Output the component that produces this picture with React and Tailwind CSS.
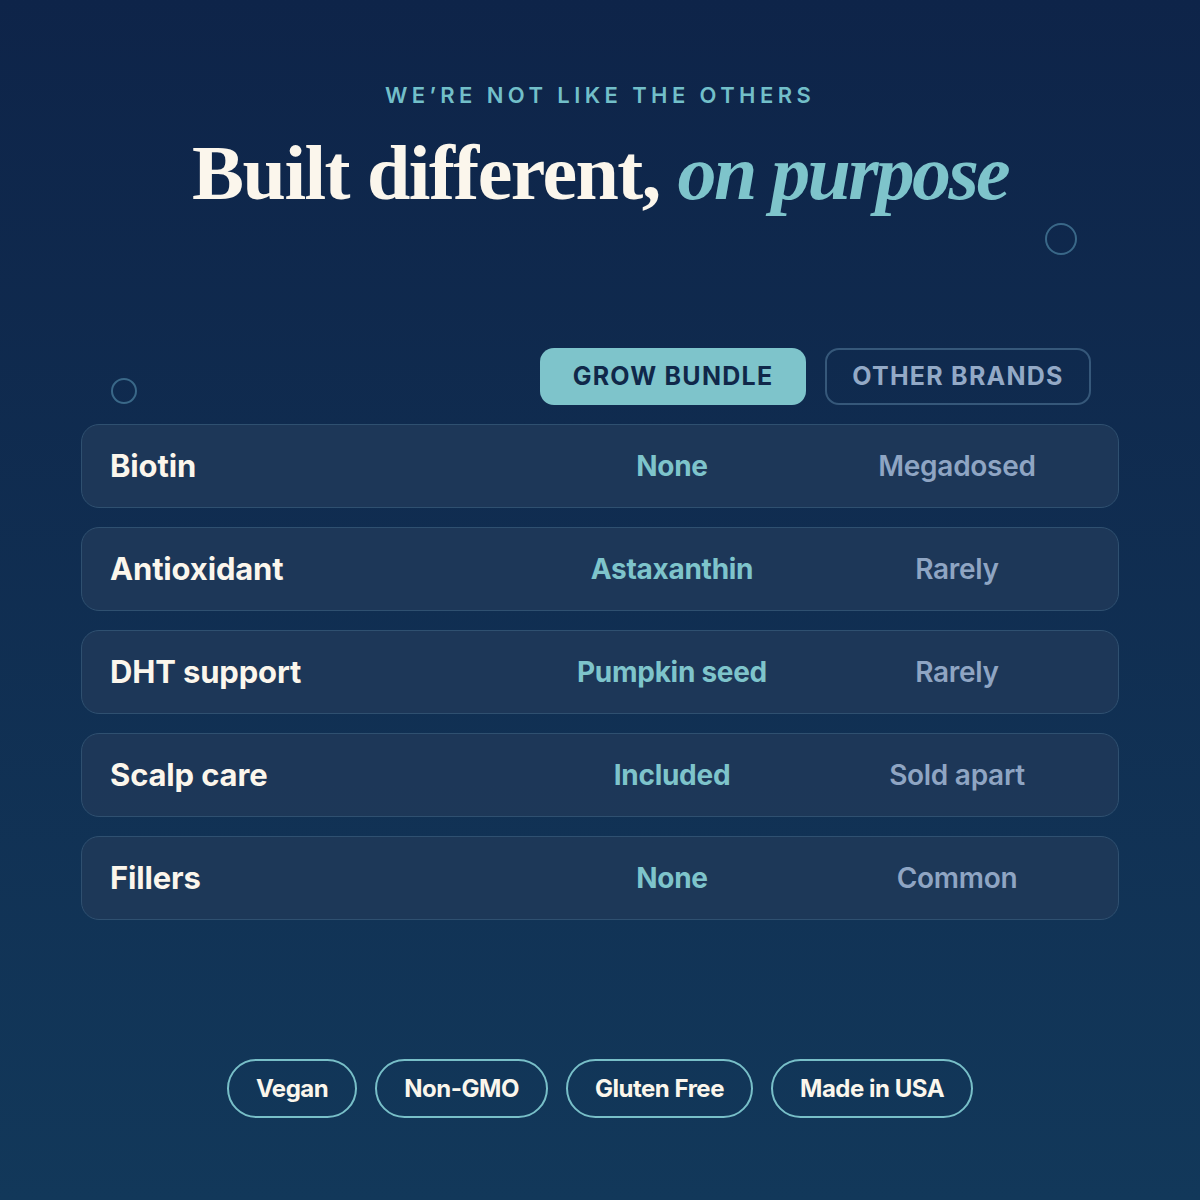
import { Fragment } from 'react'

const rows = [
  { label: 'Biotin', ours: 'None', theirs: 'Megadosed' },
  { label: 'Antioxidant', ours: 'Astaxanthin', theirs: 'Rarely' },
  { label: 'DHT support', ours: 'Pumpkin seed', theirs: 'Rarely' },
  { label: 'Scalp care', ours: 'Included', theirs: 'Sold apart' },
  { label: 'Fillers', ours: 'None', theirs: 'Common' },
]

const badges = ['Vegan', 'Non-GMO', 'Gluten Free', 'Made in USA']

const sans = "font-['Inter','Noto_Sans',sans-serif]"

const App = () => {
  return (
    <div className={`relative w-[1200px] h-[1200px] overflow-hidden bg-gradient-to-b from-[#0e2449] to-[#12385a] flex flex-col items-center ${sans}`}>
      {/* decorative rings */}
      <div className="absolute left-[1045px] top-[223px] w-[32px] h-[32px] rounded-full border-2 border-[#3a6888]" />
      <div className="absolute left-[111px] top-[378px] w-[26px] h-[26px] rounded-full border-2 border-[#3a6888]" />

      <p className="mt-[84px] text-[22px] leading-[22px] font-semibold tracking-[0.2em] text-[#72bfc9]">
        WE’RE NOT LIKE THE OTHERS
      </p>
      <h1 className="mt-[22px] font-['Liberation_Serif','DejaVu_Serif',serif] text-[78px] leading-[90px] font-bold text-[#fbf6ec] tracking-[-0.02em]">
        Built different, <span className="italic font-bold tracking-[-0.035em] text-[#7ec4cb]">on purpose</span>
      </h1>

      <div className="mt-[130px] w-[1038px]">
        <div className="grid grid-cols-[1fr_266px_266px] gap-x-[19px] pr-[28px] pl-[30px] mb-[19px]">
          <div />
          <div className="h-[57px] rounded-[14px] bg-[#7ec4cb] flex items-center justify-center text-[25px] font-bold tracking-[0.05em] text-[#10284a]">
            GROW BUNDLE
          </div>
          <div className="h-[57px] rounded-[14px] border-2 border-[#36587a] flex items-center justify-center text-[25px] font-bold tracking-[0.05em] text-[#93a9c6]">
            OTHER BRANDS
          </div>
        </div>

        <div className="flex flex-col gap-[19px]">
          {rows.map((r) => (
            <div
              key={r.label}
              className="grid grid-cols-[1fr_266px_266px] gap-x-[19px] items-center h-[84px] pr-[28px] pl-[28px] rounded-[18px] border border-[#2f5070] bg-[#1f3859]/90"
            >
              <span className="text-[31px] font-bold text-[#fbf6ec] tracking-[-0.005em]">{r.label}</span>
              <span className="text-center text-[28px] font-bold text-[#7ec4cb] tracking-[-0.01em]">{r.ours}</span>
              <span className="text-center text-[28px] font-semibold text-[#8fa5c3] tracking-[-0.01em]">{r.theirs}</span>
            </div>
          ))}
        </div>
      </div>

      <div className="mt-[139px] flex gap-[18px]">
        {badges.map((b) => (
          <Fragment key={b}>
            <div className="h-[59px] px-[27px] rounded-full border-2 border-[#78bfc8] flex items-center text-[24px] font-bold text-[#fbf6ec] tracking-[-0.02em]">
              {b}
            </div>
          </Fragment>
        ))}
      </div>
    </div>
  )
}

export default App
